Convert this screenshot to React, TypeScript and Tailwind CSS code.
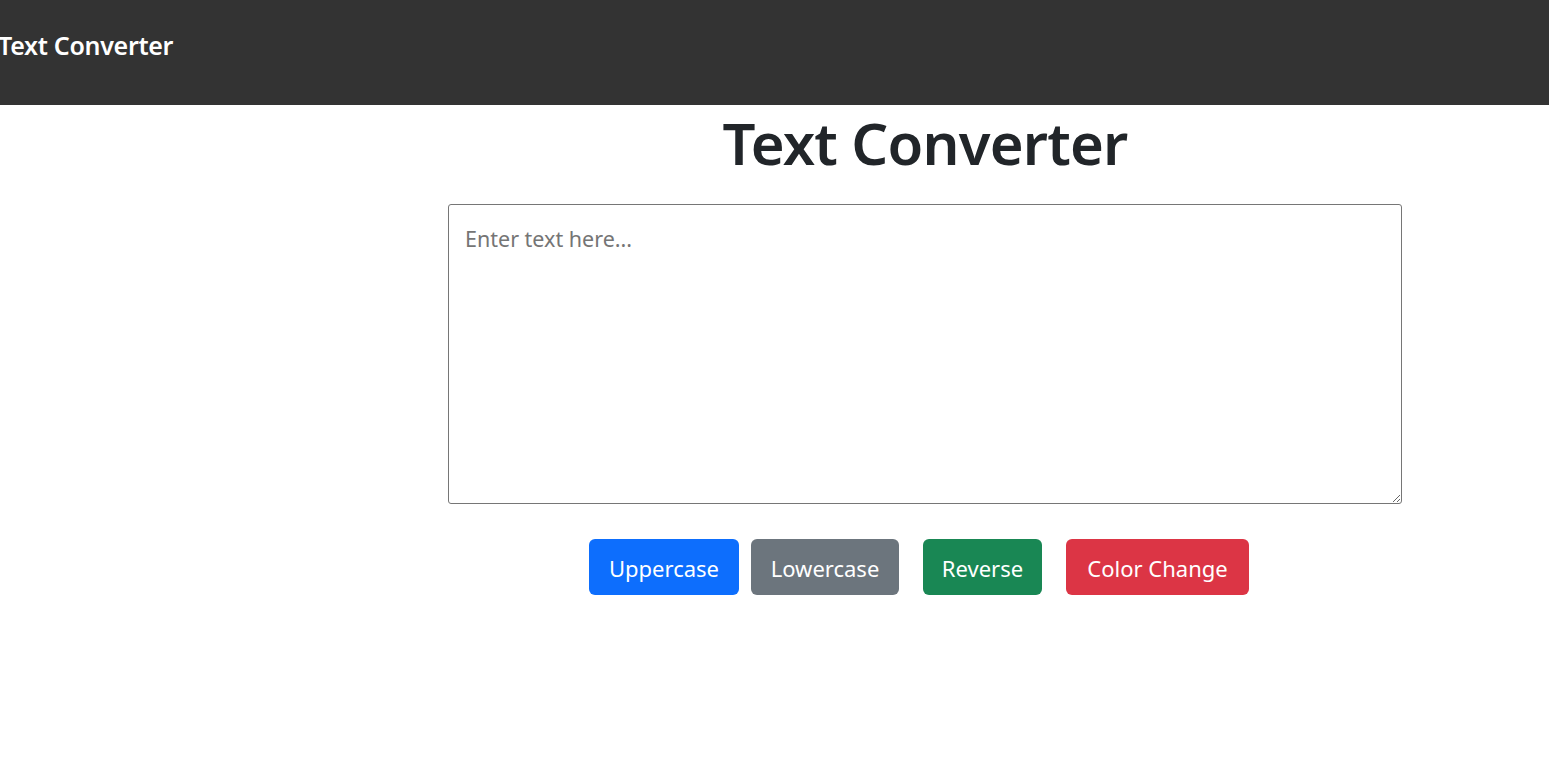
export default function App() {
  const font = { fontFamily: '"Noto Sans", "Open Sans", sans-serif' };
  return (
    <div className="min-h-screen bg-white font-['Noto_Sans',sans-serif]">
      <nav className="h-[105px] bg-[#333333] flex items-center pb-[14px]">
        <span className="text-white text-[25px] font-semibold -ml-[2px] tracking-[-0.3px]">Text Converter</span>
      </nav>
      <main className="flex flex-col items-center pl-[448px] pr-[147px]">
        <h1 className="text-[58px] leading-[80px] font-semibold text-[#212529] -mt-[2px] tracking-[-0.8px]">Text Converter</h1>
        <textarea
          placeholder="Enter text here..."
          className="mt-[21px] w-full h-[300px] border border-[#767676] rounded-[3px] px-[16px] py-[18px] text-[21.5px] text-[#212529] placeholder:text-[#757575] outline-none"
          style={font}
        />
        <div className="flex mt-[35px] -ml-[12px]">
          <button className="h-[56px] w-[150px] rounded-[6px] bg-[#0d6efd] text-white text-[22px] pt-[2px]">Uppercase</button>
          <button className="ml-[12px] h-[56px] w-[148px] rounded-[6px] bg-[#6c757d] text-white text-[22px] pt-[2px]">Lowercase</button>
          <button className="ml-[24px] h-[56px] w-[119px] rounded-[6px] bg-[#198754] text-white text-[22px] pt-[2px]">Reverse</button>
          <button className="ml-[24px] h-[56px] w-[183px] rounded-[6px] bg-[#dc3545] text-white text-[22px] pt-[2px]">Color Change</button>
        </div>
      </main>
    </div>
  );
}
